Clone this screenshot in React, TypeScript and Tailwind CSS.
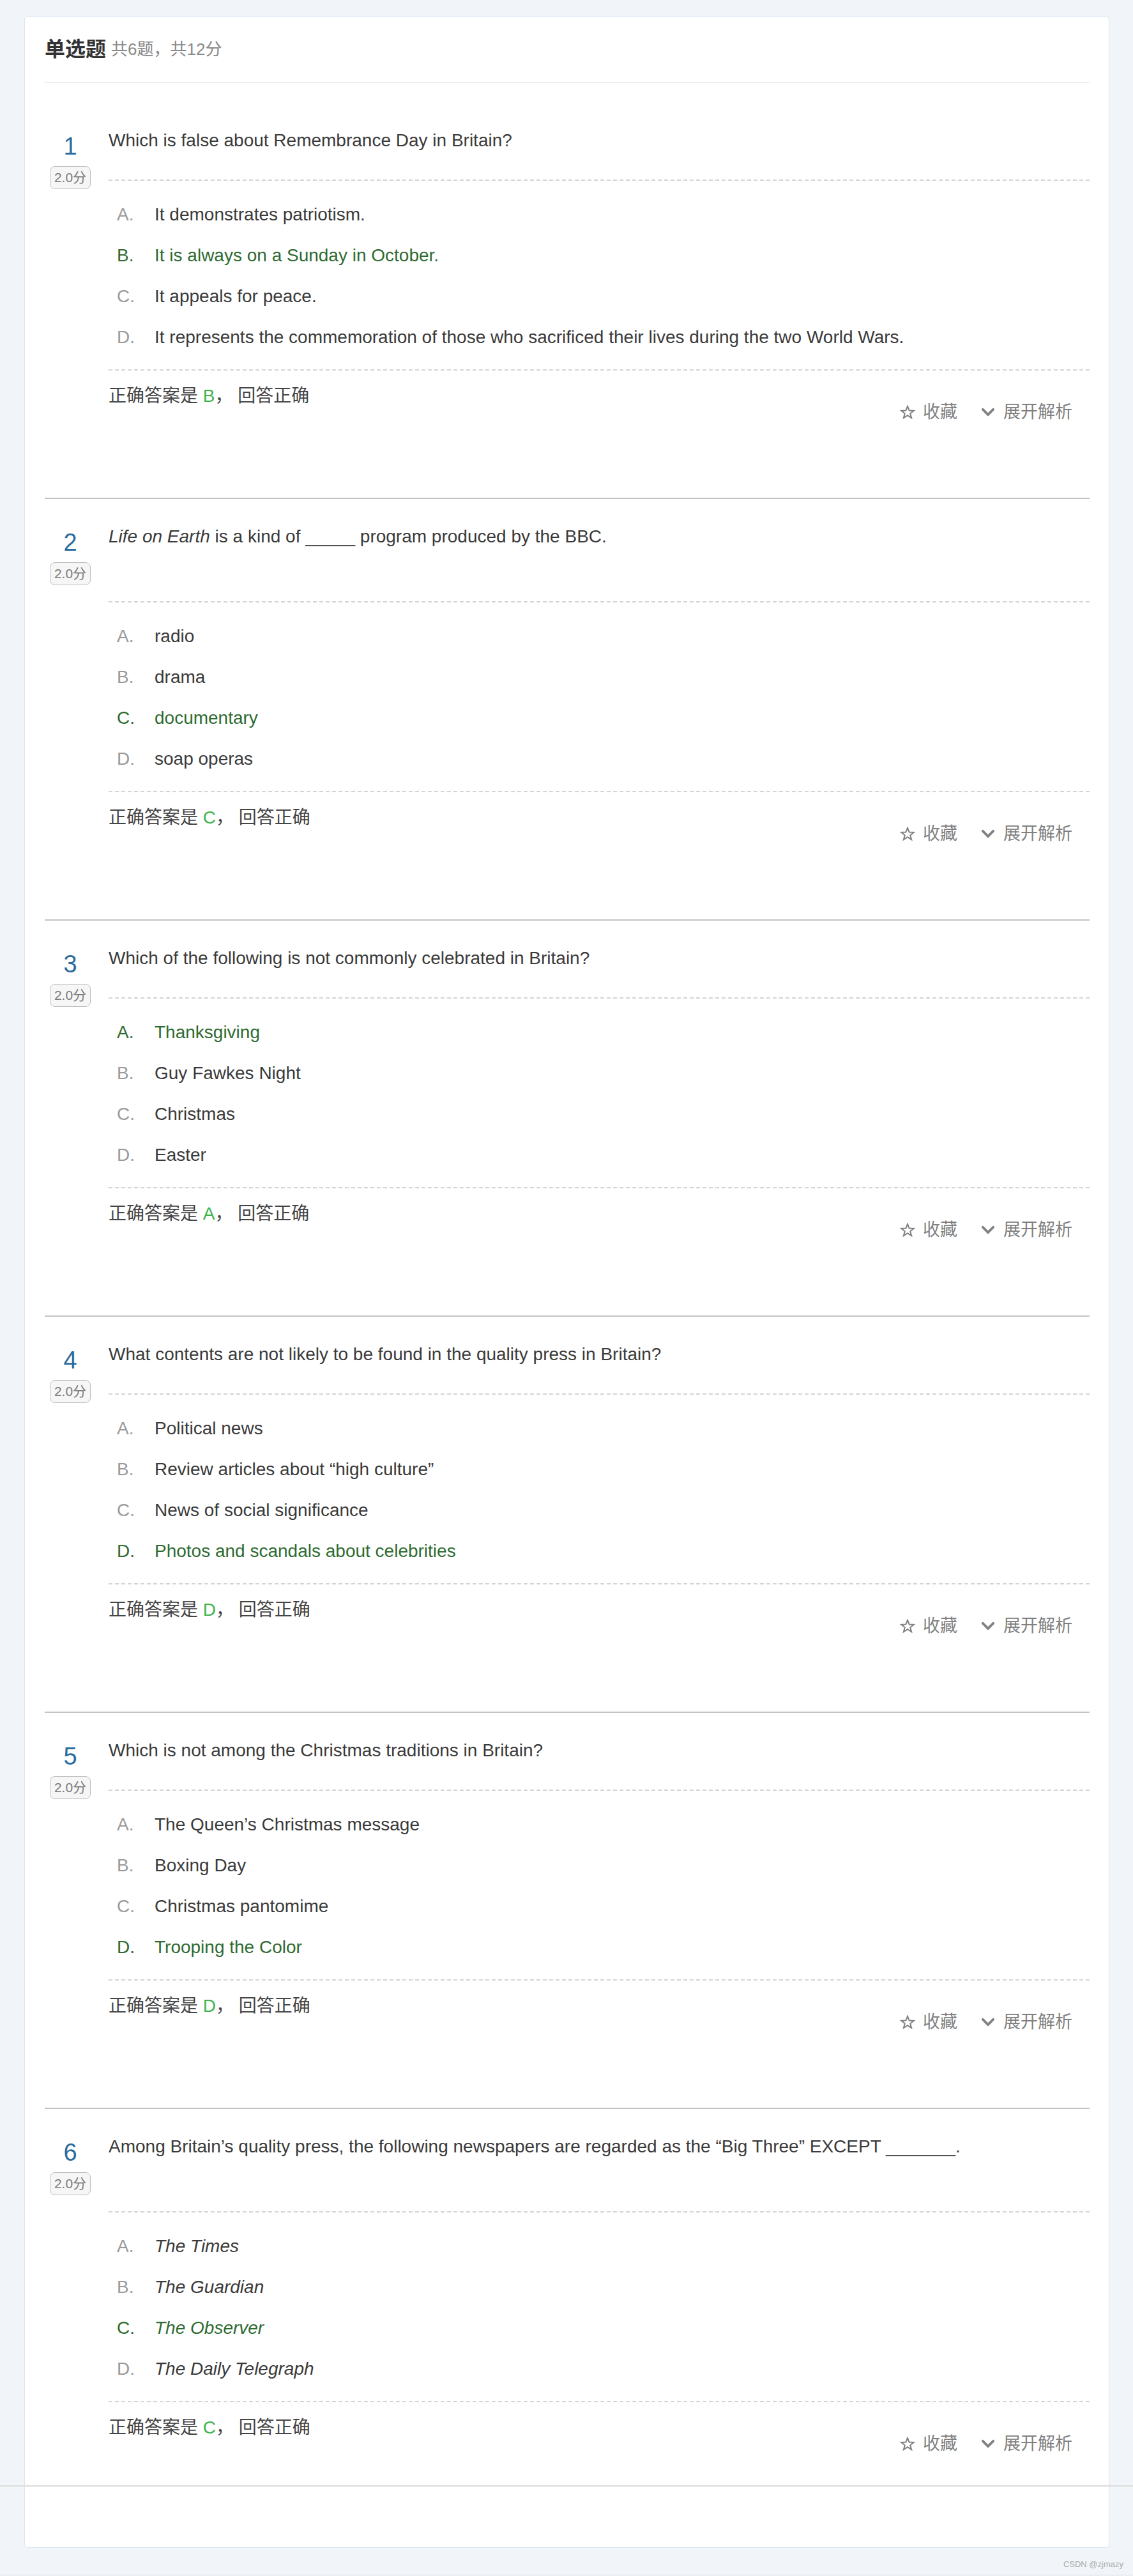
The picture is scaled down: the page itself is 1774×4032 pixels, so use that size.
import React from "react";
import { FaChevronDown } from "react-icons/fa";

type Option = { key: string; text: string };

type Question = {
  no: number;
  title: React.ReactNode;
  tall?: boolean;
  italicOptions?: boolean;
  options: Option[];
  answer: string;
};

const questions: Question[] = [
  {
    no: 1,
    title: "Which is false about Remembrance Day in Britain?",
    options: [
      { key: "A", text: "It demonstrates patriotism." },
      { key: "B", text: "It is always on a Sunday in October." },
      { key: "C", text: "It appeals for peace." },
      { key: "D", text: "It represents the commemoration of those who sacrificed their lives during the two World Wars." },
    ],
    answer: "B",
  },
  {
    no: 2,
    title: (
      <>
        <i>Life on Earth</i> is a kind of _____ program produced by the BBC.
      </>
    ),
    tall: true,
    options: [
      { key: "A", text: "radio" },
      { key: "B", text: "drama" },
      { key: "C", text: "documentary" },
      { key: "D", text: "soap operas" },
    ],
    answer: "C",
  },
  {
    no: 3,
    title: "Which of the following is not commonly celebrated in Britain?",
    options: [
      { key: "A", text: "Thanksgiving" },
      { key: "B", text: "Guy Fawkes Night" },
      { key: "C", text: "Christmas" },
      { key: "D", text: "Easter" },
    ],
    answer: "A",
  },
  {
    no: 4,
    title: "What contents are not likely to be found in the quality press in Britain?",
    options: [
      { key: "A", text: "Political news" },
      { key: "B", text: "Review articles about \u201chigh culture\u201d" },
      { key: "C", text: "News of social significance" },
      { key: "D", text: "Photos and scandals about celebrities" },
    ],
    answer: "D",
  },
  {
    no: 5,
    title: "Which is not among the Christmas traditions in Britain?",
    options: [
      { key: "A", text: "The Queen\u2019s Christmas message" },
      { key: "B", text: "Boxing Day" },
      { key: "C", text: "Christmas pantomime" },
      { key: "D", text: "Trooping the Color" },
    ],
    answer: "D",
  },
  {
    no: 6,
    title:
      "Among Britain\u2019s quality press, the following newspapers are regarded as the \u201cBig Three\u201d EXCEPT _______.",
    tall: true,
    italicOptions: true,
    options: [
      { key: "A", text: "The Times" },
      { key: "B", text: "The Guardian" },
      { key: "C", text: "The Observer" },
      { key: "D", text: "The Daily Telegraph" },
    ],
    answer: "C",
  },
];

function StarIcon() {
  return (
    <svg width="26" height="22" viewBox="0 0 26 24" fill="none" stroke="#808080" strokeWidth="2.2" strokeLinejoin="miter">
      <polygon points="13,2 15.9,9.3 23.6,9.6 17.6,14.5 19.7,22 13,17.7 6.3,22 8.4,14.5 2.4,9.6 10.1,9.3" />
    </svg>
  );
}

function QuestionBlock({ q, last }: { q: Question; last: boolean }) {
  return (
    <div className={last ? "pt-[38px] pb-[113px]" : "pt-[38px] pb-[113px] border-b-2 border-[#c4c4c4]"}>
      <div className="flex">
        <div className="w-[80px] flex flex-col items-center shrink-0">
          <div className="mt-[11px] text-[38px] leading-[38px] text-[#2b6c9e]">{q.no}</div>
          <div className="mt-[12px] h-[36px] px-[6px] flex items-center rounded-[8px] border border-[#bdbdbd] bg-[#f6f6f6] text-[21px] text-[#7a7a7a]">
            2.0分
          </div>
        </div>
        <div className="ml-[20px] flex-1">
          <div className="text-[28px] leading-[42px] text-[#3a3a3a]">{q.title}</div>
          {q.tall && <div className="h-[40px]" />}
          <div className="mt-[40px] border-t-2 border-dashed border-[#d4d4d4]" />
          <div className="pt-[21px] pb-[18px] pl-[13px]">
            {q.options.map((o) => {
              const right = o.key === q.answer;
              return (
                <div key={o.key} className="flex py-[11px] text-[28px] leading-[42px]">
                  <span className={right ? "w-[59px] shrink-0 text-[#2e6b31]" : "w-[59px] shrink-0 text-[#9a9a9a]"}>
                    {o.key}.
                  </span>
                  <span
                    className={
                      (right ? "text-[#2e6b31]" : "text-[#3a3a3a]") + (q.italicOptions ? " italic" : "")
                    }
                  >
                    {o.text}
                  </span>
                </div>
              );
            })}
          </div>
          <div className="border-t-2 border-dashed border-[#d4d4d4]" />
          <div className="mt-[19px] flex justify-between items-start">
            <div className="text-[28px] leading-[42px] text-[#444]">
              正确答案是 <span className="text-[#3bb44a]">{q.answer}</span>， 回答正确
            </div>
            <div className="mt-[25px] mr-[27px] flex items-center text-[27px] leading-[42px] text-[#808080]">
              <StarIcon />
              <span className="ml-[11px]">收藏</span>
              <FaChevronDown className="ml-[36px] text-[#808080]" size={24} />
              <span className="ml-[12px]">展开解析</span>
            </div>
          </div>
        </div>
      </div>
    </div>
  );
}

export default function App() {
  return (
    <div className="relative min-h-[4032px] bg-[#f1f5f9] font-['Liberation_Sans','Noto_Sans_CJK_SC',sans-serif]">
      <div className="pt-[25px]">
        <div className="ml-[38px] w-[1699px] rounded-[6px] border border-[#dce5ef] bg-white pl-[31px] pr-[30px] pb-[28px]">
          <div className="pt-[27px] pb-[27px] border-b-2 border-[#eeeeee] flex items-center leading-[48px]">
            <span className="text-[32px] font-bold text-[#333]">单选题</span>
            <span className="ml-[8px] text-[26px] font-normal text-[#888]">共6题，共12分</span>
          </div>
          <div className="pt-[31px]">
            {questions.map((q, i) => (
              <QuestionBlock key={q.no} q={q} last={i === questions.length - 1} />
            ))}
          </div>
        </div>
      </div>
      <div className="h-[43px] border-b border-[#dddddd] flex items-end justify-end pr-[15px] pb-[7px] text-[13px] text-[#a8a8a8]">
        CSDN @zjmazy
      </div>
      <div className="absolute left-0 right-0 top-[3890px] h-[2px] bg-[#dcdcdc]" />
    </div>
  );
}
